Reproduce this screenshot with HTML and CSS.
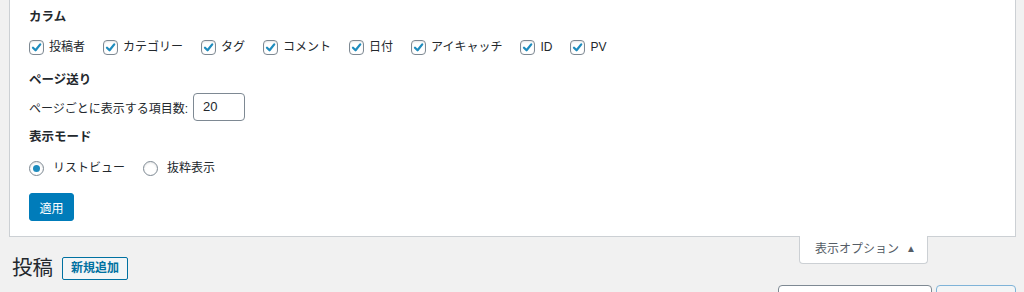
FILE: index.html
```html
<!DOCTYPE html>
<html lang="ja">
<head>
<meta charset="utf-8">
<title>投稿</title>
<link rel="stylesheet" href="styles.css">
</head>
<body>
<div class="panel">
  <div class="legend first">カラム</div>
  <div class="checks">
    <label class="opt"><span class="cb"><svg viewBox="0 0 14 14"><polyline points="3.2,7.2 6,10 11,3.6"/></svg></span>投稿者</label>
    <label class="opt"><span class="cb"><svg viewBox="0 0 14 14"><polyline points="3.2,7.2 6,10 11,3.6"/></svg></span>カテゴリー</label>
    <label class="opt"><span class="cb"><svg viewBox="0 0 14 14"><polyline points="3.2,7.2 6,10 11,3.6"/></svg></span>タグ</label>
    <label class="opt"><span class="cb"><svg viewBox="0 0 14 14"><polyline points="3.2,7.2 6,10 11,3.6"/></svg></span>コメント</label>
    <label class="opt"><span class="cb"><svg viewBox="0 0 14 14"><polyline points="3.2,7.2 6,10 11,3.6"/></svg></span>日付</label>
    <label class="opt"><span class="cb"><svg viewBox="0 0 14 14"><polyline points="3.2,7.2 6,10 11,3.6"/></svg></span>アイキャッチ</label>
    <label class="opt"><span class="cb"><svg viewBox="0 0 14 14"><polyline points="3.2,7.2 6,10 11,3.6"/></svg></span>ID</label>
    <label class="opt"><span class="cb"><svg viewBox="0 0 14 14"><polyline points="3.2,7.2 6,10 11,3.6"/></svg></span>PV</label>
  </div>
  <div class="legend l2">ページ送り</div>
  <div class="perpage">
    <span>ページごとに表示する項目数:</span>
    <span class="num">20</span>
  </div>
  <div class="legend l3">表示モード</div>
  <div class="radios">
    <label class="ropt"><span class="rb on"></span>リストビュー</label>
    <label class="ropt"><span class="rb"></span>抜粋表示</label>
  </div>
  <button class="apply">適用</button>
</div>
<div class="tab">表示オプション<span class="arrow">▲</span></div>
<div class="titlerow">
  <h1 class="title">投稿</h1>
  <a class="addnew">新規追加</a>
</div>
<div class="searchrow">
  <span class="sbox"></span>
  <span class="sbtn"></span>
</div>
</body>
</html>
```
FILE: styles.css
```css
html, body {
  margin: 0;
  padding: 0;
  background: #f1f1f1;
  overflow: hidden;
}
body {
  font-family: "Liberation Sans", "Noto Sans CJK JP", sans-serif;
  font-size: 12px;
  color: #23282d;
  width: 1024px;
  height: 292px;
}
.panel {
  margin-left: 9px;
  width: 1007px;
  background: #fff;
  border: 1px solid #ccd0d4;
  border-top: none;
  padding: 0 0 15px 19px;
  box-sizing: border-box;
}
.legend {
  font-weight: bold;
  font-size: 12.5px;
  line-height: 16px;
  height: 16px;
}
.first { padding-top: 9px; }
.l2 { margin-top: 18px; }
.l3 { margin-top: 8px; }
.checks {
  display: flex;
  margin-top: 15px;
  height: 14px;
  align-items: center;
}
.opt {
  display: flex;
  align-items: center;
  line-height: 14px;
  margin-right: 18px;
}
.cb {
  width: 15px;
  height: 15px;
  box-sizing: border-box;
  border: 1px solid #7e8993;
  border-radius: 4px;
  background: #fff;
  box-shadow: inset 0 1px 2px rgba(0,0,0,0.1);
  margin-right: 5px;
  display: flex;
}
.cb svg {
  width: 13px;
  height: 13px;
  fill: none;
  stroke: #1e8cbe;
  stroke-width: 2.4;
  stroke-linecap: round;
  stroke-linejoin: round;
}
.perpage {
  display: flex;
  align-items: center;
  margin-top: 5px;
  height: 28px;
}
.num {
  margin-left: 5px;
  width: 52px;
  height: 28px;
  box-sizing: border-box;
  border: 1px solid #7e8993;
  border-radius: 4px;
  padding-left: 9px;
  font-size: 13px;
  line-height: 26px;
}
.radios {
  display: flex;
  align-items: center;
  margin-top: 16px;
  height: 14px;
}
.ropt {
  display: flex;
  align-items: center;
  line-height: 14px;
  margin-right: 18px;
}
.rb {
  width: 15px;
  height: 15px;
  box-sizing: border-box;
  border: 1px solid #7e8993;
  border-radius: 50%;
  margin-right: 9px;
  display: flex;
  align-items: center;
  justify-content: center;
  box-shadow: inset 0 1px 2px rgba(0,0,0,0.1);
}
.rb.on::before {
  content: "";
  width: 7px;
  height: 7px;
  border-radius: 50%;
  background: #1e8cbe;
}
.apply {
  display: block;
  margin-top: 18px;
  width: 45px;
  height: 28px;
  border: 1px solid #007cba;
  border-radius: 3px;
  background: #007cba;
  color: #fff;
  font-family: inherit;
  font-size: 12px;
  padding: 0;
}
.tab {
  float: right;
  margin-right: 96px;
  margin-top: -1px;
  width: 129px;
  height: 28px;
  box-sizing: border-box;
  background: #fff;
  border: 1px solid #ccd0d4;
  border-top: none;
  border-radius: 0 0 4px 4px;
  padding-left: 15px;
  color: #555d66;
  line-height: 26px;
  font-size: 12px;
}
.arrow {
  font-size: 10px;
  margin-left: 7px;
  vertical-align: 1px;
}
.titlerow {
  display: flex;
  align-items: center;
  padding-left: 12px;
  padding-top: 19px;
  height: 24px;
}
.title {
  margin: 0;
  font-size: 20.5px;
  font-weight: normal;
  line-height: 24px;
  color: #23282d;
  margin-right: 9px;
}
.addnew {
  display: block;
  height: 23px;
  box-sizing: border-box;
  border: 1px solid #0071a1;
  border-radius: 2px;
  background: #f3f5f6;
  color: #0071a1;
  font-weight: bold;
  font-size: 12px;
  line-height: 21px;
  padding: 0 8px;
}
.searchrow {
  display: flex;
  justify-content: flex-end;
  padding-right: 8px;
  margin-top: 5px;
  gap: 4px;
}
.sbox {
  width: 154px;
  height: 28px;
  box-sizing: border-box;
  border: 1px solid #7e8993;
  border-radius: 4px;
  background: #fff;
}
.sbtn {
  width: 80px;
  height: 28px;
  box-sizing: border-box;
  border: 1px solid #7fb3d8;
  border-radius: 4px;
  background: #f3f5f6;
}
```
